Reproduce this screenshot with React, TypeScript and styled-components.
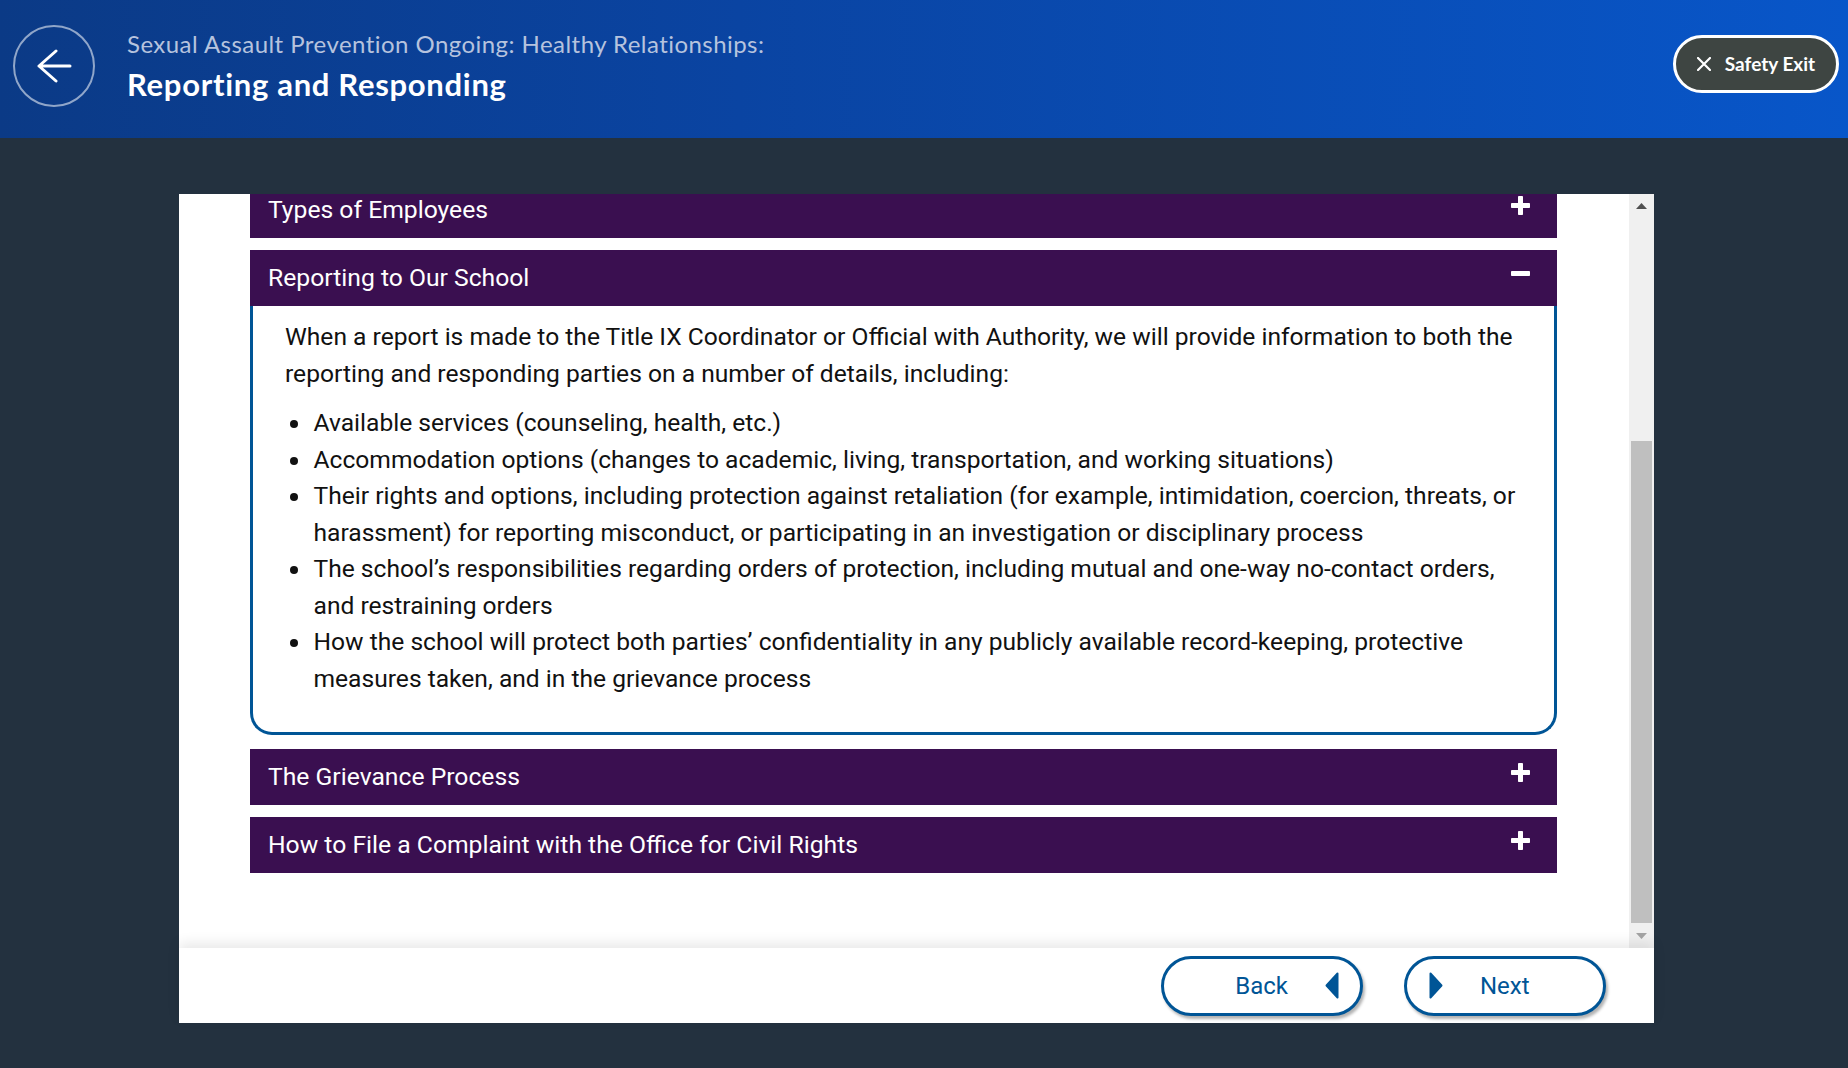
import React, { useLayoutEffect, useRef } from "react";
import styled, { createGlobalStyle } from "styled-components";

const GlobalStyle = createGlobalStyle`
  html, body {
    margin: 0;
    padding: 0;
  }
  body {
    background: #23313f;
    font-family: Roboto, "Liberation Sans", Arial, sans-serif;
  }
`;

const Page = styled.div`
  min-height: 100vh;
  display: flex;
  flex-direction: column;
`;

const TopBar = styled.header`
  height: 138px;
  box-sizing: border-box;
  display: flex;
  align-items: center;
  padding: 0 9px 6px 13px;
  background: linear-gradient(90deg, #0b3a86 0%, #0a44a2 40%, #0856c9 100%);
`;

const BackCircle = styled.button`
  width: 82px;
  height: 82px;
  flex-shrink: 0;
  box-sizing: border-box;
  border-radius: 50%;
  border: 2px solid rgba(255, 255, 255, 0.55);
  background: transparent;
  padding: 0;
  display: flex;
  align-items: center;
  justify-content: center;
  cursor: pointer;
`;

const TitleBlock = styled.div`
  margin-left: 32px;
  display: flex;
  flex-direction: column;
  gap: 8px;
  font-family: Lato, "Open Sans", sans-serif;
`;

const Subtitle = styled.div`
  font-size: 24px;
  line-height: 28px;
  letter-spacing: 0.45px;
  color: #b6c3de;
`;

const Title = styled.h1`
  margin: 0;
  font-size: 31px;
  line-height: 36px;
  letter-spacing: 0.7px;
  font-weight: 700;
  color: #ffffff;
`;

const SafetyExit = styled.button`
  margin-left: auto;
  margin-bottom: 5px;
  width: 166px;
  height: 58px;
  box-sizing: border-box;
  border-radius: 29px;
  border: 3px solid #ffffff;
  background: #3e4542;
  color: #ffffff;
  display: flex;
  align-items: center;
  justify-content: center;
  gap: 14px;
  padding: 0;
  font-family: Lato, "Open Sans", sans-serif;
  font-weight: 700;
  font-size: 19px;
  cursor: pointer;
`;

const Main = styled.main`
  flex: 1;
  display: flex;
  padding: 56px 194px 45px 179px;
`;

const Panel = styled.section`
  flex: 1;
  height: 829px;
  background: #ffffff;
  display: flex;
  flex-direction: column;
`;

const ScrollRow = styled.div`
  height: 754px;
  display: flex;
`;

const ScrollView = styled.div`
  flex: 1;
  overflow: hidden;
  padding: 0 72px 0 71px;
`;

const AccordionList = styled.div`
  display: flex;
  flex-direction: column;
  padding-bottom: 90px;
`;

const Item = styled.div<{ $open?: boolean }>`
  display: flex;
  flex-direction: column;
  margin-bottom: ${(p) => (p.$open ? "14px" : "12px")};
`;

const ItemHeader = styled.button`
  height: 56px;
  box-sizing: border-box;
  border: none;
  background: #3a0f50;
  color: #ffffff;
  display: flex;
  justify-content: space-between;
  align-items: center;
  padding: 0 27px 2px 18px;
  font-family: Roboto, "Liberation Sans", sans-serif;
  font-size: 24.7px;
  text-align: left;
  cursor: pointer;
`;

const ToggleIcon = styled.span`
  align-self: flex-start;
  margin-top: 14px;
  width: 19px;
  height: 19px;
  display: flex;
`;

const ItemBody = styled.div`
  border: 3px solid #005596;
  border-top: none;
  border-radius: 0 0 22px 22px;
  padding: 13px 24px 35px 32px;
  color: #111111;
  font-size: 24.6px;
  line-height: 36.5px;
`;

const Paragraph = styled.p`
  margin: 0 0 13px;
`;

const Bullets = styled.ul`
  margin: 0;
  padding: 0;
  list-style: none;
`;

const Bullet = styled.li`
  display: grid;
  grid-template-columns: 28.5px 1fr;
  &::before {
    content: "";
    width: 8px;
    height: 8px;
    border-radius: 50%;
    background: #111111;
    margin: 15px 0 0 5px;
  }
`;

const Scrollbar = styled.div`
  width: 25px;
  background: #f0f0f0;
  display: flex;
  flex-direction: column;
`;

const ScrollArrow = styled.div<{ $h: number }>`
  height: ${(p) => p.$h}px;
  display: flex;
  align-items: center;
  justify-content: center;
`;

const ScrollTrack = styled.div`
  flex: 1;
  display: flex;
  flex-direction: column;
  justify-content: flex-end;
  padding: 0 2px;
`;

const ScrollThumb = styled.div<{ $size: string }>`
  height: ${(p) => p.$size};
  background: #bfbfbf;
`;

const Footer = styled.footer`
  position: relative;
  z-index: 1;
  height: 75px;
  background: #ffffff;
  display: flex;
  justify-content: flex-end;
  align-items: center;
  gap: 41px;
  padding-right: 48px;
  box-shadow: 0 -5px 12px rgba(0, 0, 0, 0.09);
`;

const NavButton = styled.button<{ $dir: "back" | "next" }>`
  width: 202px;
  height: 60px;
  box-sizing: border-box;
  border: 3px solid #005596;
  border-radius: 30px;
  background: #ffffff;
  box-shadow: 2px 3px 3px rgba(0, 0, 0, 0.3);
  display: flex;
  align-items: center;
  justify-content: ${(p) => (p.$dir === "back" ? "flex-end" : "flex-start")};
  gap: 37px;
  padding: ${(p) => (p.$dir === "back" ? "0 21px 0 0" : "0 0 0 22px")};
  font-family: Roboto, "Liberation Sans", sans-serif;
  font-size: 24px;
  color: #005596;
  cursor: pointer;
`;

const ArrowLeftIcon = () => (
  <svg width="36" height="34" viewBox="0 0 36 34" fill="none">
    <path
      d="M34 17H3M20 2L3 17L20 32"
      stroke="#ffffff"
      strokeWidth="3"
      strokeLinecap="round"
      strokeLinejoin="round"
    />
  </svg>
);

const CloseIcon = () => (
  <svg width="14" height="14" viewBox="0 0 14 14">
    <path d="M1 1L13 13M13 1L1 13" stroke="#ffffff" strokeWidth="2.2" strokeLinecap="round" />
  </svg>
);

const PlusMinus = ({ open }: { open: boolean }) => (
  <svg width="19" height="19" viewBox="0 0 19 19">
    <rect x="0" y="7" width="19" height="5" rx="0.8" fill="#ffffff" />
    {!open && <rect x="7" y="0" width="5" height="19" rx="0.8" fill="#ffffff" />}
  </svg>
);

const Triangle = ({ dir }: { dir: "left" | "right" }) => (
  <svg width="14" height="27" viewBox="0 0 14 27">
    <path
      d={dir === "left" ? "M12.5 1.5L1.5 13.5L12.5 25.5Z" : "M1.5 1.5L12.5 13.5L1.5 25.5Z"}
      fill="#005596"
      stroke="#005596"
      strokeWidth="2"
      strokeLinejoin="round"
    />
  </svg>
);

const ScrollTri = ({ up, color }: { up: boolean; color: string }) => (
  <svg width="11" height="6" viewBox="0 0 11 6">
    <path d={up ? "M0 6L5.5 0L11 6Z" : "M0 0L5.5 6L11 0Z"} fill={color} />
  </svg>
);

type Section = { title: string; open?: boolean };

const sections: Section[] = [
  { title: "Types of Employees" },
  { title: "Reporting to Our School", open: true },
  { title: "The Grievance Process" },
  { title: "How to File a Complaint with the Office for Civil Rights" },
];

const bulletItems = [
  "Available services (counseling, health, etc.)",
  "Accommodation options (changes to academic, living, transportation, and working situations)",
  "Their rights and options, including protection against retaliation (for example, intimidation, coercion, threats, or harassment) for reporting misconduct, or participating in an investigation or disciplinary process",
  "The school\u2019s responsibilities regarding orders of protection, including mutual and one-way no-contact orders, and restraining orders",
  "How the school will protect both parties\u2019 confidentiality in any publicly available record-keeping, protective measures taken, and in the grievance process",
];

export default function App() {
  const scrollRef = useRef<HTMLDivElement>(null);

  useLayoutEffect(() => {
    if (scrollRef.current) scrollRef.current.scrollTop = 12;
  }, []);

  return (
    <Page>
      <GlobalStyle />
      <TopBar>
        <BackCircle aria-label="Back">
          <ArrowLeftIcon />
        </BackCircle>
        <TitleBlock>
          <Subtitle>Sexual Assault Prevention Ongoing: Healthy Relationships:</Subtitle>
          <Title>Reporting and Responding</Title>
        </TitleBlock>
        <SafetyExit>
          <CloseIcon />
          Safety Exit
        </SafetyExit>
      </TopBar>
      <Main>
        <Panel>
          <ScrollRow>
            <ScrollView ref={scrollRef}>
              <AccordionList>
                {sections.map((s) => (
                  <Item key={s.title} $open={s.open}>
                    <ItemHeader>
                      {s.title}
                      <ToggleIcon>
                        <PlusMinus open={!!s.open} />
                      </ToggleIcon>
                    </ItemHeader>
                    {s.open && (
                      <ItemBody>
                        <Paragraph>
                          When a report is made to the Title IX Coordinator or Official with Authority, we will
                          provide information to both the reporting and responding parties on a number of details,
                          including:
                        </Paragraph>
                        <Bullets>
                          {bulletItems.map((b) => (
                            <Bullet key={b}>{b}</Bullet>
                          ))}
                        </Bullets>
                      </ItemBody>
                    )}
                  </Item>
                ))}
              </AccordionList>
            </ScrollView>
            <Scrollbar>
              <ScrollArrow $h={24}>
                <ScrollTri up color="#505050" />
              </ScrollArrow>
              <ScrollTrack>
                <ScrollThumb $size="68.4%" />
              </ScrollTrack>
              <ScrollArrow $h={25}>
                <ScrollTri up={false} color="#a3a3a3" />
              </ScrollArrow>
            </Scrollbar>
          </ScrollRow>
          <Footer>
            <NavButton $dir="back">
              Back
              <Triangle dir="left" />
            </NavButton>
            <NavButton $dir="next">
              <Triangle dir="right" />
              Next
            </NavButton>
          </Footer>
        </Panel>
      </Main>
    </Page>
  );
}
